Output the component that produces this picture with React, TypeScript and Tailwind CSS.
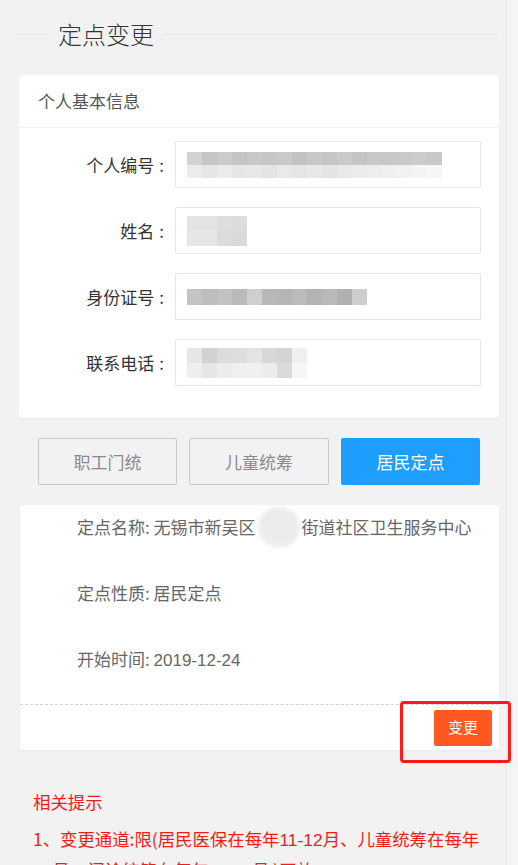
const font = { fontFamily: '"Noto Sans CJK SC", "Liberation Sans", sans-serif' };
const latin = { fontFamily: '"Liberation Sans", sans-serif' };

interface FieldProps {
  label: string;
  blur: React.ReactNode;
}

function Field({ label, blur }: FieldProps) {
  return (
    <div className="flex items-center">
      <label className="w-[156px] shrink-0 pr-[11px] text-right text-[17px] text-[#333]">
        {label}
        <span className="ml-[5px]">:</span>
      </label>
      <div className="flex h-[47px] w-[306px] items-center overflow-hidden rounded-[2px] border border-[#e6e6e6] bg-white pl-[11px]">
        {blur}
      </div>
    </div>
  );
}

// pixelated blocks standing in for the masked values
function Mosaic({ cells, h }: { cells: string[]; h: string }) {
  return (
    <div className={`flex blur-[0.6px] ${h}`}>
      {cells.map((c, i) => (
        <div key={i} className="w-[15px]" style={{ background: c }} />
      ))}
    </div>
  );
}

export default function App() {
  return (
    <div style={font} className="flex min-h-[865px] w-[518px] bg-[#f2f2f2]">
      <div className="w-[506px]">
        {/* Title */}
        <div className="flex h-[75px] items-center pl-[16px] pr-[9px] pb-[7px]">
          <div className="w-[32px] border-t border-[#e6e6e6]" />
          <h1 className="px-[10px] text-[24px] font-light leading-none text-[#333]">定点变更</h1>
          <div className="flex-1 border-t border-[#e6e6e6]" />
        </div>

        {/* Personal info card */}
        <div className="ml-[19px] w-[480px] rounded-[3px] bg-white pb-[32px] shadow-[0_1px_2px_rgba(0,0,0,0.04)]">
          <div className="flex h-[53px] items-center border-b border-[#f2f2f2] pl-[19px] text-[17px] text-[#555]">
            个人基本信息
          </div>
          <div className="flex flex-col gap-[19px] pt-[13px]">
            <Field
              label="个人编号"
              blur={
                <div className="flex flex-col">
                  <Mosaic h="h-[13px]" cells={["#d2d2d2", "#c6c6c6", "#cbcbcb", "#c4c4c4", "#c8c8c8", "#c6c6c6", "#c9c9c9", "#c2c2c2", "#c8c8c8", "#c6c6c6", "#cacaca", "#c4c4c4", "#c8c8c8", "#c8c8c8", "#c9c9c9", "#cbcbcb", "#c8c8c8"]} />
                  <Mosaic h="h-[13px]" cells={["#ececec", "#e6e6e6", "#ebebeb", "#e6e6e6", "#e8e8e8", "#e4e4e4", "#e9e9e9", "#e5e5e5", "#e8e8e8", "#e4e4e4", "#e9e9e9", "#ececec", "#eeeeee", "#f0f0f0", "#f2f2f2", "#f4f4f4", "#f6f6f6"]} />
                </div>
              }
            />
            <Field
              label="姓名"
              blur={
                <div className="flex flex-col">
                  <Mosaic h="h-[15px]" cells={["#e4e4e4", "#e4e4e4", "#dedede", "#dcdcdc"]} />
                  <Mosaic h="h-[15px]" cells={["#e6e6e6", "#e6e6e6", "#dcdcdc", "#dadada"]} />
                </div>
              }
            />
            <Field
              label="身份证号"
              blur={
                <Mosaic h="h-[16px]" cells={["#c4c4c4", "#bdbdbd", "#c2c2c2", "#bababa", "#cfcfcf", "#b8b8b8", "#b5b5b5", "#bbbbbb", "#b3b3b3", "#b9b9b9", "#b0b0b0", "#cdcdcd"]} />
              }
            />
            <Field
              label="联系电话"
              blur={
                <div className="flex flex-col">
                  <Mosaic h="h-[15px]" cells={["#e6e6e6", "#d2d2d2", "#dcdcdc", "#dedede", "#e4e4e4", "#d8d8d8", "#d4d4d4", "#f0f0f0"]} />
                  <Mosaic h="h-[15px]" cells={["#eeeeee", "#e6e6e6", "#ececec", "#f0f0f0", "#f0f0f0", "#ececec", "#dadada", "#f6f6f6"]} />
                </div>
              }
            />
          </div>
        </div>

        {/* Type buttons */}
        <div className="mt-[20px] ml-[38px] flex gap-[12px]">
          <button className="h-[47px] w-[139px] rounded-[2px] border border-[#c9c9c9] bg-[#f2f2f2] text-[17px] text-[#8a8a8a]">
            职工门统
          </button>
          <button className="h-[47px] w-[140px] rounded-[2px] border border-[#c9c9c9] bg-[#f2f2f2] text-[17px] text-[#8a8a8a]">
            儿童统筹
          </button>
          <button className="h-[47px] w-[139px] rounded-[2px] bg-[#1e9fff] text-[17px] text-white">
            居民定点
          </button>
        </div>

        {/* Designated point card */}
        <div className="relative mt-[20px] ml-[20px] w-[479px] rounded-[2px] bg-white shadow-[0_1px_2px_rgba(0,0,0,0.04)]">
          <div className="flex flex-col gap-[39px] pl-[57px] pt-[8px] pb-[32px] text-[17px] leading-[27px] text-[#666]">
            <div className="flex h-[27px] items-center whitespace-nowrap">
              定点名称: 无锡市新吴区
              <span className="-my-[7px] mx-[2px] inline-block h-[40px] w-[42px] rounded-full bg-[#ececec] blur-[2px]" />
              街道社区卫生服务中心
            </div>
            <div className="h-[27px]">定点性质: 居民定点</div>
            <div className="h-[27px]">
              开始时间: <span style={latin}>2019-12-24</span>
            </div>
          </div>
          <div className="flex h-[46px] items-center justify-end border-t border-dashed border-[#d2d2d2] pr-[7px]">
            <button className="h-[36px] w-[58px] rounded-[2px] bg-[#ff5722] text-[15px] text-white">变更</button>
          </div>
          <div className="absolute left-[380px] top-[196px] h-[62px] w-[111px] rounded-[4px] border-[3px] border-[#ff1a1a]" />
        </div>

        {/* Tips */}
        <div className="mt-[38px] pl-[33px] pr-[20px] text-[17.4px] text-[#f01c1c]">
          <p className="leading-[28px]">相关提示</p>
          <p className="mt-[8px] leading-[29px]">
            1、变更通道:限(居民医保在每年<span style={latin}>11-12</span>月、儿童统筹在每年
            <span style={latin}>12</span>月、门诊统筹在每年
            <span style={latin}>11-12</span>月 )开放
          </p>
        </div>
      </div>
      <div className="w-[12px] border-l border-[#e9e9e9] bg-[#f5f5f5]" />
    </div>
  );
}
